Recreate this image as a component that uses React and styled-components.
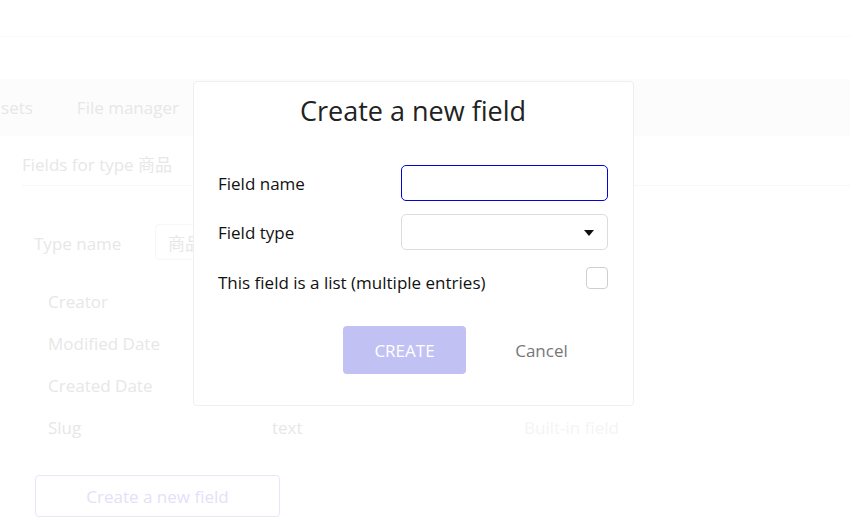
import React from "react";
import styled, { createGlobalStyle } from "styled-components";

const Global = createGlobalStyle`
  html, body { margin: 0; padding: 0; background: #fff; }
  body { font-family: "Open Sans", "Noto Sans CJK SC", sans-serif; width: 850px; height: 524px; overflow: hidden; }
  * { box-sizing: border-box; }
`;

const Page = styled.div`
  position: relative;
  width: 850px;
  height: 524px;
  overflow: hidden;
  color: #e7e7e7;
  font-size: 17px;
`;

const Header = styled.div`
  height: 37px;
  border-bottom: 1px solid #f9f9f9;
`;

const TabBar = styled.div`
  margin-top: 42px;
  height: 57px;
  background: #fcfcfc;
  display: flex;
  align-items: center;
  gap: 44px;
  overflow: hidden;
`;

const Tab = styled.div`
  white-space: nowrap;
  line-height: 23px;
  margin-left: ${(p) => p.$offset || 0}px;
`;

const Section = styled.div`
  padding-left: 22px;
`;

const SectionTitle = styled.div`
  margin-top: 17px;
  line-height: 23px;
  padding-bottom: 9px;
  border-bottom: 1px solid #f7f7f7;
`;

const TypeRow = styled.div`
  display: flex;
  align-items: center;
  margin-top: 38px;
  padding-left: 12px;
`;

const TypeLabel = styled.div`
  width: 121px;
  line-height: 23px;
  padding-top: 3px;
`;

const TypeInput = styled.div`
  width: 260px;
  height: 36px;
  border: 1px solid #f7f7f7;
  border-radius: 4px;
  padding-left: 12px;
  display: flex;
  align-items: center;
`;

const FieldList = styled.div`
  margin-top: 20px;
  padding-left: 26px;
  display: flex;
  flex-direction: column;
`;

const FieldRow = styled.div`
  display: flex;
  align-items: center;
  height: 42px;
`;

const FieldName = styled.div`
  width: 224px;
`;

const FieldType = styled.div`
  width: 252px;
`;

const FieldNote = styled.div`
  color: #f4f4f4;
`;

const GhostButton = styled.div`
  margin-top: 27px;
  margin-left: 13px;
  width: 245px;
  height: 42px;
  border: 1px solid #e8e6fb;
  border-radius: 4px;
  display: flex;
  align-items: center;
  justify-content: center;
  color: #e3e1f9;
`;

const Modal = styled.div`
  position: absolute;
  left: 193px;
  top: 81px;
  width: 441px;
  height: 325px;
  background: #fff;
  border: 1px solid #efefef;
  border-radius: 4px;
  padding: 0 25px 0 24px;
  display: flex;
  flex-direction: column;
  color: #111;
`;

const Title = styled.h2`
  margin: 10px 0 0;
  text-align: center;
  font-size: 27px;
  font-weight: 400;
  line-height: 38px;
  color: #222;
`;

const Form = styled.div`
  margin-top: 35px;
  display: flex;
  flex-direction: column;
  gap: 13px;
`;

const Row = styled.div`
  display: flex;
  align-items: center;
  justify-content: space-between;
  min-height: 36px;
`;

const Label = styled.label`
  font-size: 17px;
  line-height: 23px;
  color: #111;
  margin-top: ${(p) => p.$shift || 0}px;
`;

const TextInput = styled.input`
  width: 207px;
  height: 36px;
  border: 1px solid #0205d3;
  border-radius: 5px;
  outline: none;
  padding: 0 10px;
  font-family: inherit;
  font-size: 16px;
`;

const Select = styled.div`
  position: relative;
  width: 207px;
  height: 36px;
  border: 1px solid #dcdcdc;
  border-radius: 5px;
`;

const Caret = styled.span`
  position: absolute;
  right: 13px;
  top: 15px;
  width: 0;
  height: 0;
  border-left: 5px solid transparent;
  border-right: 5px solid transparent;
  border-top: 6px solid #111;
`;

const Checkbox = styled.div`
  width: 22px;
  height: 22px;
  border: 1px solid #cfcfcf;
  border-radius: 4px;
  margin-top: -6px;
`;

const Buttons = styled.div`
  margin-top: 27px;
  display: flex;
  gap: 14px;
  padding-left: 125px;
`;

const Primary = styled.button`
  width: 123px;
  height: 48px;
  border: none;
  border-radius: 4px;
  background: #c1c1f4;
  color: #fff;
  font-family: inherit;
  font-size: 17px;
`;

const Secondary = styled.button`
  width: 123px;
  height: 48px;
  border: none;
  background: transparent;
  color: #777;
  font-family: inherit;
  font-size: 17px;
`;

const fields = [
  { name: "Creator" },
  { name: "Modified Date" },
  { name: "Created Date" },
  { name: "Slug", type: "text", note: "Built-in field" },
];

export default function App() {
  return (
    <Page>
      <Global />
      <Header />
      <TabBar>
        <Tab $offset={-58}>Option sets</Tab>
        <Tab>File manager</Tab>
      </TabBar>
      <Section>
        <SectionTitle>Fields for type 商品</SectionTitle>
        <TypeRow>
          <TypeLabel>Type name</TypeLabel>
          <TypeInput>商品</TypeInput>
        </TypeRow>
        <FieldList>
          {fields.map((f) => (
            <FieldRow key={f.name}>
              <FieldName>{f.name}</FieldName>
              <FieldType>{f.type}</FieldType>
              <FieldNote>{f.note}</FieldNote>
            </FieldRow>
          ))}
        </FieldList>
        <GhostButton>Create a new field</GhostButton>
      </Section>

      <Modal>
        <Title>Create a new field</Title>
        <Form>
          <Row>
            <Label $shift={1}>Field name</Label>
            <TextInput />
          </Row>
          <Row>
            <Label $shift={1}>Field type</Label>
            <Select>
              <Caret />
            </Select>
          </Row>
          <Row>
            <Label $shift={2}>This field is a list (multiple entries)</Label>
            <Checkbox />
          </Row>
        </Form>
        <Buttons>
          <Primary>CREATE</Primary>
          <Secondary>Cancel</Secondary>
        </Buttons>
      </Modal>
    </Page>
  );
}
